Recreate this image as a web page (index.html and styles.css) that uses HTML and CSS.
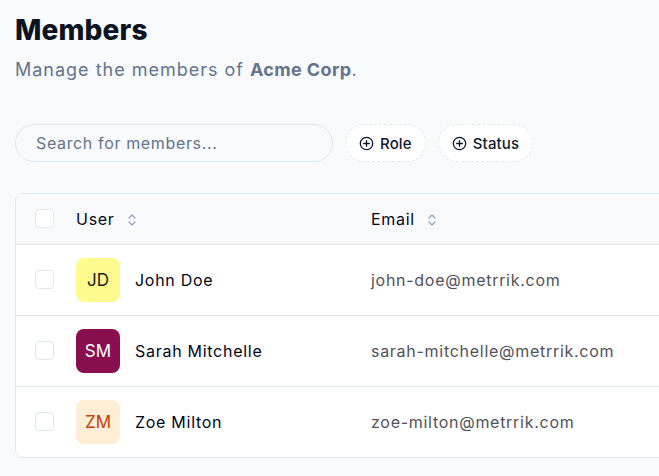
FILE: index.html
```html
<!DOCTYPE html>
<html lang="en">

<head>
    <meta charset="UTF-8">
    <meta name="viewport" content="width=device-width, initial-scale=1.0">
    <title>Members</title>
    <link rel="stylesheet" href="styles.css">
</head>

<body>
    <main class="page">
        <header class="page-head">
            <h1>Members</h1>
            <p>Manage the members of <strong>Acme Corp</strong>.</p>
        </header>

        <div class="toolbar">
            <input type="text" class="search" placeholder="Search for members...">
            <button class="filter">
                <svg viewBox="0 0 16 16" width="15" height="15"><circle cx="8" cy="8" r="6.6" /><path d="M8 5v6M5 8h6" /></svg>
                Role
            </button>
            <button class="filter">
                <svg viewBox="0 0 16 16" width="15" height="15"><circle cx="8" cy="8" r="6.6" /><path d="M8 5v6M5 8h6" /></svg>
                Status
            </button>
        </div>

        <div class="table-wrap">
            <table class="members">
                <thead>
                    <tr>
                        <th class="col-check"><span class="check"></span></th>
                        <th class="col-user">User <svg class="sort" viewBox="0 0 12 16" width="12" height="16"><path d="M3 6l3-3 3 3M3 10l3 3 3-3" /></svg></th>
                        <th class="col-email">Email <svg class="sort" viewBox="0 0 12 16" width="12" height="16"><path d="M3 6l3-3 3 3M3 10l3 3 3-3" /></svg></th>
                    </tr>
                </thead>
                <tbody>
                    <tr>
                        <td class="col-check"><span class="check"></span></td>
                        <td class="col-user">
                            <div class="user"><span class="avatar yellow">JD</span>John Doe</div>
                        </td>
                        <td class="col-email">john-doe@metrrik.com</td>
                    </tr>
                    <tr>
                        <td class="col-check"><span class="check"></span></td>
                        <td class="col-user">
                            <div class="user"><span class="avatar plum">SM</span>Sarah Mitchelle</div>
                        </td>
                        <td class="col-email">sarah-mitchelle@metrrik.com</td>
                    </tr>
                    <tr>
                        <td class="col-check"><span class="check"></span></td>
                        <td class="col-user">
                            <div class="user"><span class="avatar peach">ZM</span>Zoe Milton</div>
                        </td>
                        <td class="col-email">zoe-milton@metrrik.com</td>
                    </tr>
                </tbody>
            </table>
        </div>
    </main>
</body>

</html>
```

FILE: styles.css
```css
* {
    margin: 0;
    padding: 0;
    box-sizing: border-box;
}

html,
body {
    overflow: hidden;
}

body {
    font-family: Inter, "Noto Sans", sans-serif;
    background: #f8fafc;
    color: #0f172a;
    letter-spacing: 0.045em;
}

.page {
    padding: 12px 0 0 15px;
    width: 820px;
}

/* Title block */
.page-head h1 {
    font-size: 28px;
    line-height: 36px;
    font-weight: 800;
    color: #0b1220;
    letter-spacing: 0.005em;
}

.page-head p {
    margin-top: 8px;
    font-size: 18px;
    line-height: 28px;
    color: #64748b;
    letter-spacing: 0.055em;
}

.page-head strong {
    font-weight: 700;
    letter-spacing: 0.02em;
}

/* Search + filters */
.toolbar {
    display: flex;
    align-items: center;
    gap: 12px;
    margin-top: 40px;
}

.search {
    width: 318px;
    height: 38px;
    padding: 0 20px;
    border: 1px solid #e2e8f0;
    border-radius: 999px;
    background: #f8fafc;
    font-family: inherit;
    font-size: 16px;
    letter-spacing: 0.04em;
    color: #0f172a;
    outline: none;
}

.search::placeholder {
    color: #64748b;
}

.filter {
    display: flex;
    align-items: center;
    gap: 6px;
    height: 38px;
    padding: 0 13px;
    border: 1px dashed #e2e8f0;
    border-radius: 999px;
    background: #fff;
    font-family: inherit;
    font-size: 15px;
    font-weight: 500;
    letter-spacing: 0.01em;
    color: #0f172a;
}

.filter svg {
    fill: none;
    stroke: #0f172a;
    stroke-width: 1.4;
    stroke-linecap: round;
}

/* Table */
.table-wrap {
    margin-top: 31px;
    border: 1px solid #e2e8f0;
    border-radius: 8px;
    background: #fff;
    overflow: hidden;
}

.members {
    width: 100%;
    border-collapse: collapse;
    font-size: 16px;
}

.members th {
    height: 50px;
    background: #f8fafc;
    text-align: left;
    font-weight: 400;
    color: #020617;
    border-bottom: 1px solid #e2e8f0;
}

.members td {
    height: 71px;
    border-bottom: 1px solid #e2e8f0;
}

.members tbody tr:last-child td {
    border-bottom: none;
}

.col-check {
    width: 60px;
    padding-left: 19px;
}

.col-user {
    width: 295px;
}

.col-email {
    color: #52525b;
}

.members th.col-email {
    color: #020617;
}

.check {
    display: block;
    width: 19px;
    height: 19px;
    border: 1px solid #e2e8f0;
    border-radius: 4px;
    background: #fff;
}

.sort {
    margin-left: 6px;
    vertical-align: -3px;
    fill: none;
    stroke: #94a3b8;
    stroke-width: 1.3;
    stroke-linecap: round;
    stroke-linejoin: round;
}

.user {
    display: flex;
    align-items: center;
    gap: 15px;
    font-weight: 400;
    color: #020617;
}

.avatar {
    display: flex;
    align-items: center;
    justify-content: center;
    width: 44px;
    height: 44px;
    border-radius: 8px;
    font-size: 17px;
    letter-spacing: 0;
    font-weight: 400;
}

.avatar.yellow {
    background: #fefb8e;
    color: #1c1917;
}

.avatar.plum {
    background: #880e4f;
    color: #fff;
}

.avatar.peach {
    background: #ffedd5;
    color: #c2410c;
}
```
